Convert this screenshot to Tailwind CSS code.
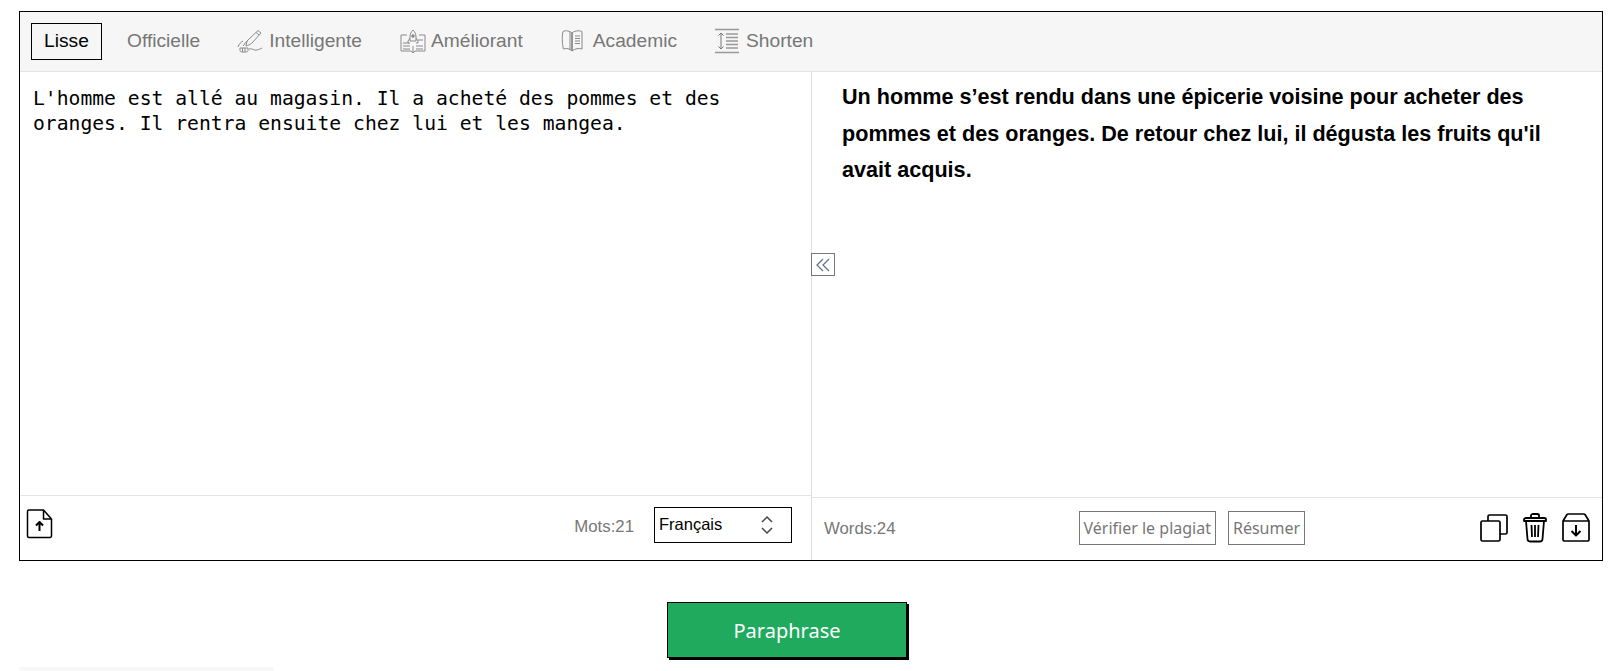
<!DOCTYPE html>
<html lang="fr">
<head>
<meta charset="utf-8">
<script src="https://cdn.jsdelivr.net/npm/@tailwindcss/browser@4"></script>
</head>
<body class="bg-white h-[671px] overflow-hidden font-['Liberation_Sans',sans-serif]">
<div class="pt-[11px] pl-[19px] flex flex-col h-[671px]">
  <div class="w-[1584px] h-[550px] border border-black flex flex-col shrink-0">
    <div class="h-[60px] bg-[#f6f6f6] border-b border-[#e3e3e3] flex items-center pl-[11px] text-[19.2px] text-[#777] shrink-0">
      <div class="w-[71px] h-[37px] border border-black text-black flex items-center justify-center">Lisse</div>
      <div class="ml-[25px]">Officielle</div>
      <div class="ml-[37px] flex items-center gap-[6px]">
        <svg class="w-[26px] h-[24px]" viewBox="0 0 26 24" fill="none" stroke="#8a8a8a" stroke-width="1"><path d="M21 1.500l3 2.500-9 10c-2 1.500-4 2.500-6 3l1-5zM19 3.500l3 2.500M6 12c-2 1-4 3-5 6M10 12l-4 5M3 19h8v2.500c0 1-1 1.500-2 1.500H5c-1 0-2-.5-2-1.500zM5.500 19v4M8 19v4M12 20c4-1 5 2 8 1s3-1 5-2"/></svg>
        <span>Intelligente</span>
      </div>
      <div class="ml-[38px] flex items-center gap-[5px]">
        <svg class="w-[26px] h-[25px]" viewBox="0 0 26 25" fill="none" stroke="#8a8a8a" stroke-width="1"><path d="M13 1c2 2 3 4 3 7v4h-6V8c0-3 1-5 3-7zM10 9l-2 3v2h2M16 9l2 3v2h-2"/><circle cx="13" cy="7" r="1.300" fill="#8a8a8a"/><path d="M7 6H1v16h10l2 2 2-2h10V6h-6M13 17v7M3 14h6M3 17h7M3 20h7M16 17h7M16 20h7M18 11h5"/></svg>
        <span>Améliorant</span>
      </div>
      <div class="ml-[38px] flex items-center gap-[8px]">
        <svg class="w-[24px] h-[24px]" viewBox="0 0 24 24" fill="none" stroke="#8a8a8a" stroke-width="1"><path d="M11 4C9 2 5 1 2 2.500 1 6 1 15 2.500 20c3-1 6-.5 8.500 2zM11 4c2-2 7-3 10-1.500V20c-3-1-7-.5-10 2zM11 4v18M9 3v18"/><path d="M14 7h5M14 9.500h5M14 12h5M14 14.500h5" stroke-width="1.200"/></svg>
        <span>Academic</span>
      </div>
      <div class="ml-[38px] flex items-center gap-[7px]">
        <svg class="w-[24px] h-[26px]" viewBox="0 0 24 26" fill="none" stroke="#999" stroke-width="1"><path d="M0 1.500h24M0 24.500h24" stroke-width="1.500"/><path d="M6 5v16M3.500 7.500L6 5l2.500 2.500M3.500 18.500L6 21l2.500-2.500" stroke="#777"/><path d="M11 6h12M11 9.500h12M11 13h12M11 16.500h12M11 20h12" stroke-width="1.300"/></svg>
        <span>Shorten</span>
      </div>
    </div>
    <div class="flex-1 flex min-h-0">
      <div class="w-[791px] flex flex-col shrink-0">
        <div class="flex-1 pl-[13px] pr-[12px] pt-[14px] font-['DejaVu_Sans_Mono',monospace] text-[19.7px] leading-[25px] text-black">L'homme est allé au magasin. Il a acheté des pommes et des<br>oranges. Il rentra ensuite chez lui et les mangea.</div>
        <div class="h-[65px] border-t border-[#e5e5e5] flex items-center pl-[6px] pr-[19px]">
          <svg class="w-[27px] h-[30px] mb-[8px] text-black" viewBox="0 0 26 30" fill="none" stroke="currentColor" stroke-width="1.500" stroke-linejoin="round"><path d="M2.500 1h14.500l8 9v17a1.500 1.500 0 0 1-1.500 1.500h-21A1.500 1.500 0 0 1 1 27V2.500A1.500 1.500 0 0 1 2.500 1zM17 1v9h8"/><path d="M13 22v-9M9.500 16.500L13 13l3.500 3.500" stroke-width="2"/></svg>
          <span class="ml-auto text-[16.8px] text-[#777] mb-[2px]">Mots:21</span>
          <div class="ml-[20px] w-[138px] h-[36px] mb-[6px] border border-black flex items-center pl-[4px] pr-[18px] text-[16.5px] text-black">
            <span class="-mt-[2px]">Français</span>
            <svg class="ml-auto w-[12px] h-[20px]" viewBox="0 0 12 20" fill="none" stroke="#444" stroke-width="1.500"><path d="M1 7l5-5 5 5M1 13l5 5 5-5"/></svg>
          </div>
        </div>
      </div>
      <div class="relative flex-1 flex flex-col border-l border-[#e0e0e0] min-w-0">
        <button class="absolute -left-px top-[181px] w-[24px] h-[23px] bg-white border border-[#777] flex items-center justify-center">
          <svg class="w-[14px] h-[14px]" viewBox="0 0 14 14" fill="none" stroke="#64748b" stroke-width="1.300"><path d="M7 1L1 7l6 6M13 1L7 7l6 6"/></svg>
        </button>
        <div class="flex-1 pl-[30px] pr-[30px] pt-[7px] text-[21.6px] leading-[36.5px] font-bold text-black">Un homme s’est rendu dans une épicerie voisine pour acheter des pommes et des oranges. De retour chez lui, il dégusta les fruits qu'il avait acquis.</div>
        <div class="h-[63px] border-t border-[#e5e5e5] flex items-center pl-[12px] pr-[12px] text-[#777]">
          <span class="text-[16.8px]">Words:24</span>
          <div class="ml-[183px] h-[34px] px-[4px] border border-[#777] flex items-center font-['Noto_Sans',sans-serif] text-[16px] mb-[2px]">Vérifier le plagiat</div>
          <div class="ml-[12px] h-[34px] px-[4px] border border-[#777] flex items-center font-['Noto_Sans',sans-serif] text-[16px] mb-[2px]">Résumer</div>
          <div class="ml-auto flex items-center gap-[15px] text-black mb-[3px]">
            <svg class="w-[28px] h-[28px]" viewBox="0 0 28 28" fill="none" stroke="currentColor" stroke-width="1.700" stroke-linejoin="round"><rect x="1" y="7" width="19" height="20" rx="1.500"/><path d="M8 7V2.500A1.500 1.500 0 0 1 9.500 1h16A1.500 1.500 0 0 1 27 2.500v16a1.500 1.500 0 0 1-1.500 1.500H20"/></svg>
            <svg class="w-[24px] h-[30px]" viewBox="0 0 24 30" fill="none" stroke="currentColor" stroke-width="1.800" stroke-linejoin="round"><path d="M1 8V6.500C1 5.500 2 5 3 5h18c1 0 2 .5 2 1.500V8zM8 5V2.500C8 1.500 9 1 10 1h4c1 0 2 .5 2 1.500V5M3 8l1.500 18c.1 1.500 1 2.500 2.500 2.500h10c1.500 0 2.400-1 2.500-2.500L21 8M8.500 12l.5 12M12 12v12M15.500 12l-.5 12"/></svg>
            <svg class="w-[28px] h-[29px]" viewBox="0 0 28 29" fill="none" stroke="currentColor" stroke-width="1.700" stroke-linejoin="round"><path d="M1 8l4-6.500C5.300 1 6 1 6.500 1h15c.5 0 1.200 0 1.500.5L27 8v18.500A1.500 1.500 0 0 1 25.500 28h-23A1.500 1.500 0 0 1 1 26.500zM1 8h26"/><path d="M14 12v10M9.500 18l4.500 4.500 4.500-4.500" stroke-width="2"/></svg>
          </div>
        </div>
      </div>
    </div>
  </div>
  <button class="self-start w-[240px] h-[56px] mt-[41px] ml-[648px] pt-[2px] bg-[#20aa5e] border border-black shadow-[2px_2px_0_#000] text-white text-[20px] font-['Noto_Sans',sans-serif] shrink-0">Paraphrase</button>
  <div class="w-[255px] h-[4px] mt-[9px] bg-[#f8f8f8] shrink-0"></div>
</div>
</body>
</html>
